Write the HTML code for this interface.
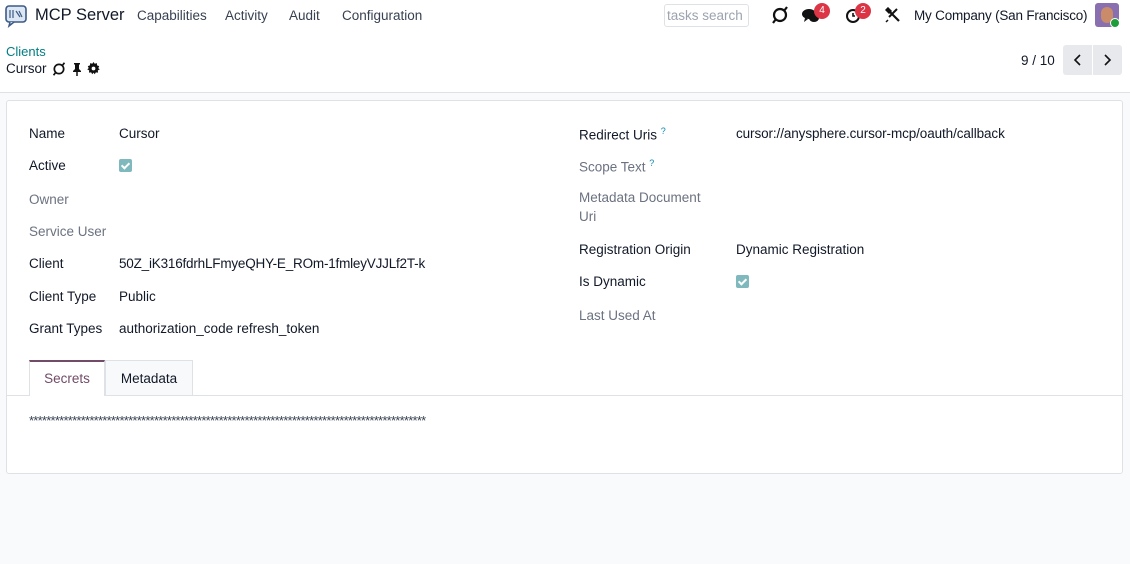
<!DOCTYPE html>
<html><head><meta charset="utf-8"><style>
*{box-sizing:border-box;margin:0;padding:0}
body{width:1130px;height:564px;overflow:hidden;background:#f9fafb;font-family:"Liberation Sans",sans-serif;font-size:13.5px;color:#374151;position:relative}
.abs{position:absolute;white-space:nowrap}
.nav{position:absolute;left:0;top:0;width:1130px;height:32px;background:#fff}
.cp{position:absolute;left:0;top:32px;width:1130px;height:61px;background:#fff;border-bottom:1px solid #dee2e6}
.sheet{position:absolute;left:6px;top:100px;width:1117px;height:374px;background:#fff;border:1px solid #dee2e6;border-radius:3px}
.lb{color:#111827;font-weight:500}
.lg{color:#6b7280}
.cb{position:absolute;width:13px;height:13px;background:#7fb9bd;border-radius:2px}
.cb:after{content:"";position:absolute;left:4px;top:2px;width:3px;height:6px;border:solid #fff;border-width:0 2px 2px 0;transform:rotate(45deg)}
.badge{position:absolute;width:16px;height:16px;border-radius:8px;background:#dc3545;color:#fff;font-size:10px;text-align:center;line-height:16px}
sup{color:#0d8ab0;font-size:9px}
</style></head><body>
<div class="nav">
 <svg class="abs" style="left:4px;top:4px" width="24" height="24" viewBox="0 0 24 24"><rect x="2" y="2" width="20" height="16" rx="3" fill="#dde6f3" stroke="#3b5a86" stroke-width="1.6"/><path d="M6 18 L5 22 L10 18" fill="#dde6f3" stroke="#3b5a86" stroke-width="1.5"/><path d="M6 6v8M9 6v8M12 7l4 6M15 7l3 6" stroke="#3b5a86" stroke-width="1.2"/></svg>
 <div class="abs" style="left:35px;top:6px;font-size:16.5px;color:#111827">MCP Server</div>
 <div class="abs" style="left:137px;top:8px">Capabilities</div>
 <div class="abs" style="left:225px;top:8px">Activity</div>
 <div class="abs" style="left:289px;top:8px">Audit</div>
 <div class="abs" style="left:342px;top:8px">Configuration</div>
 <div class="abs" style="left:664px;top:4px;width:85px;height:23px;border:1px solid #dee2e6;border-radius:3px;color:#9ca3af;padding:3px 2px">tasks search</div>
 <svg class="abs" style="left:771px;top:6px" width="18" height="18" viewBox="0 0 18 18"><circle cx="9" cy="9" r="6" fill="none" stroke="#111" stroke-width="2.2"/><path d="M2 17L5 13M16 1L13 5" stroke="#111" stroke-width="2.2"/></svg>
 <svg class="abs" style="left:802px;top:8px" width="18" height="16" viewBox="0 0 18 16"><ellipse cx="7" cy="6" rx="7" ry="5" fill="#111"/><path d="M3 10l-1 4 4-3z" fill="#111"/><ellipse cx="12" cy="10" rx="5" ry="4" fill="#111"/></svg>
 <div class="badge" style="left:814px;top:3px">4</div>
 <svg class="abs" style="left:845px;top:7px" width="17" height="17" viewBox="0 0 17 17"><circle cx="8" cy="9" r="6" fill="none" stroke="#111" stroke-width="2"/><path d="M8 6v3h2" stroke="#111" stroke-width="1.6" fill="none"/></svg>
 <div class="badge" style="left:855px;top:3px">2</div>
 <svg class="abs" style="left:885px;top:7px" width="16" height="16" viewBox="0 0 16 16"><path d="M4 4l10 10" stroke="#111" stroke-width="2.2"/><path d="M12 2l-8 8" stroke="#111" stroke-width="2"/><path d="M1 3l2-2 3 3-2 2z M3 13l-2 2" fill="#111" stroke="#111" stroke-width="1.5"/></svg>
 <div class="abs" style="left:914px;top:8px;color:#111827;letter-spacing:-0.2px">My Company (San Francisco)</div>
 <div class="abs" style="left:1095px;top:3px;width:24px;height:24px;border-radius:3px;background:#8a6fb0"><div style="margin:4px 6px;width:12px;height:16px;border-radius:6px;background:#c98b6a"></div></div>
 <div class="abs" style="left:1110px;top:18px;width:10px;height:10px;border-radius:5px;background:#1e9e3a;border:1.5px solid #fff"></div>
</div>
<div class="cp">
 <div class="abs" style="left:6px;top:12px;color:#017e84;font-size:13px">Clients</div>
 <div class="abs" style="left:6px;top:29px;color:#111827">Cursor</div>
 <svg class="abs" style="left:52px;top:30px" width="14" height="14" viewBox="0 0 18 18"><circle cx="9" cy="9" r="6" fill="none" stroke="#111" stroke-width="2.2"/><path d="M2 17L5 13M16 1L13 5" stroke="#111" stroke-width="2.2"/></svg>
 <svg class="abs" style="left:71px;top:30px" width="12" height="14" viewBox="0 0 12 14"><path d="M3 1h6v1l-1 1v4l2 2v1H2V9l2-2V3L3 2z" fill="#111"/><path d="M6 10v4" stroke="#111" stroke-width="1.5"/></svg>
 <svg class="abs" style="left:87px;top:30px" width="13" height="13" viewBox="0 0 16 16"><path d="M8 0l1.5 2.2 2.6-.8.3 2.7 2.6.9-1.1 2.5L15.7 9l-2.4 1.3.3 2.7-2.7-.3L9.5 15 8 13l-1.5 2-1.4-2.3-2.7.3.3-2.7L.3 9l1.8-1.5L1 5l2.6-.9.3-2.7 2.6.8z" fill="#111"/><circle cx="8" cy="8" r="2.3" fill="#fff"/></svg>
 <div class="abs" style="left:1021px;top:21px;color:#111827">9 / 10</div>
 <div class="abs" style="left:1063px;top:13px;width:29px;height:30px;background:#e7e9ed;border-radius:3px 0 0 3px"><svg style="margin:9px 10px" width="9" height="12" viewBox="0 0 9 12"><path d="M7 1L2 6l5 5" fill="none" stroke="#111" stroke-width="1.6"/></svg></div>
 <div class="abs" style="left:1093px;top:13px;width:29px;height:30px;background:#e7e9ed;border-radius:0 3px 3px 0"><svg style="margin:9px 10px" width="9" height="12" viewBox="0 0 9 12"><path d="M2 1l5 5-5 5" fill="none" stroke="#111" stroke-width="1.6"/></svg></div>
</div>
<div class="sheet">
 <div class="abs lb" style="left:22px;top:25px">Name</div><div class="abs" style="left:112px;top:25px;color:#111827">Cursor</div>
 <div class="abs lb" style="left:22px;top:57px">Active</div><div class="cb" style="left:112px;top:58px"></div>
 <div class="abs lg" style="left:22px;top:91px">Owner</div>
 <div class="abs lg" style="left:22px;top:123px">Service User</div>
 <div class="abs lb" style="left:22px;top:155px">Client</div><div class="abs" style="left:112px;top:155px;color:#111827;letter-spacing:-0.2px">50Z_iK316fdrhLFmyeQHY-E_ROm-1fmleyVJJLf2T-k</div>
 <div class="abs lb" style="left:22px;top:188px">Client Type</div><div class="abs" style="left:112px;top:188px;color:#111827">Public</div>
 <div class="abs lb" style="left:22px;top:220px">Grant Types</div><div class="abs" style="left:112px;top:220px;color:#111827">authorization_code refresh_token</div>
 <div class="abs lb" style="left:572px;top:25px">Redirect Uris <sup>?</sup></div><div class="abs" style="left:729px;top:25px;color:#111827;letter-spacing:-0.1px">cursor://anysphere.cursor-mcp/oauth/callback</div>
 <div class="abs lg" style="left:572px;top:57px">Scope Text <sup>?</sup></div>
 <div class="abs lg" style="left:572px;top:89px">Metadata Document</div>
 <div class="abs lg" style="left:572px;top:108px">Uri</div>
 <div class="abs lb" style="left:572px;top:141px">Registration Origin</div><div class="abs" style="left:729px;top:141px;color:#111827">Dynamic Registration</div>
 <div class="abs lb" style="left:572px;top:173px">Is Dynamic</div><div class="cb" style="left:729px;top:174px"></div>
 <div class="abs lg" style="left:572px;top:207px">Last Used At</div>
 <div class="abs" style="left:0;top:294px;width:1115px;border-top:1px solid #dee2e6"></div>
 <div class="abs" style="left:22px;top:259px;width:76px;height:36px;background:#fff;border:1px solid #dee2e6;border-top:2px solid #714b67;border-bottom:none;color:#714b67;text-align:center;line-height:34px">Secrets</div>
 <div class="abs" style="left:98px;top:259px;width:88px;height:35px;background:#f8f9fa;border:1px solid #dee2e6;border-bottom:none;color:#111827;text-align:center;line-height:35px">Metadata</div>
 <div class="abs" style="left:22px;top:312px;width:404px;overflow:hidden;font-size:13px;letter-spacing:-0.75px;color:#374151">********************************************************************************************</div>
</div>
</body></html>
